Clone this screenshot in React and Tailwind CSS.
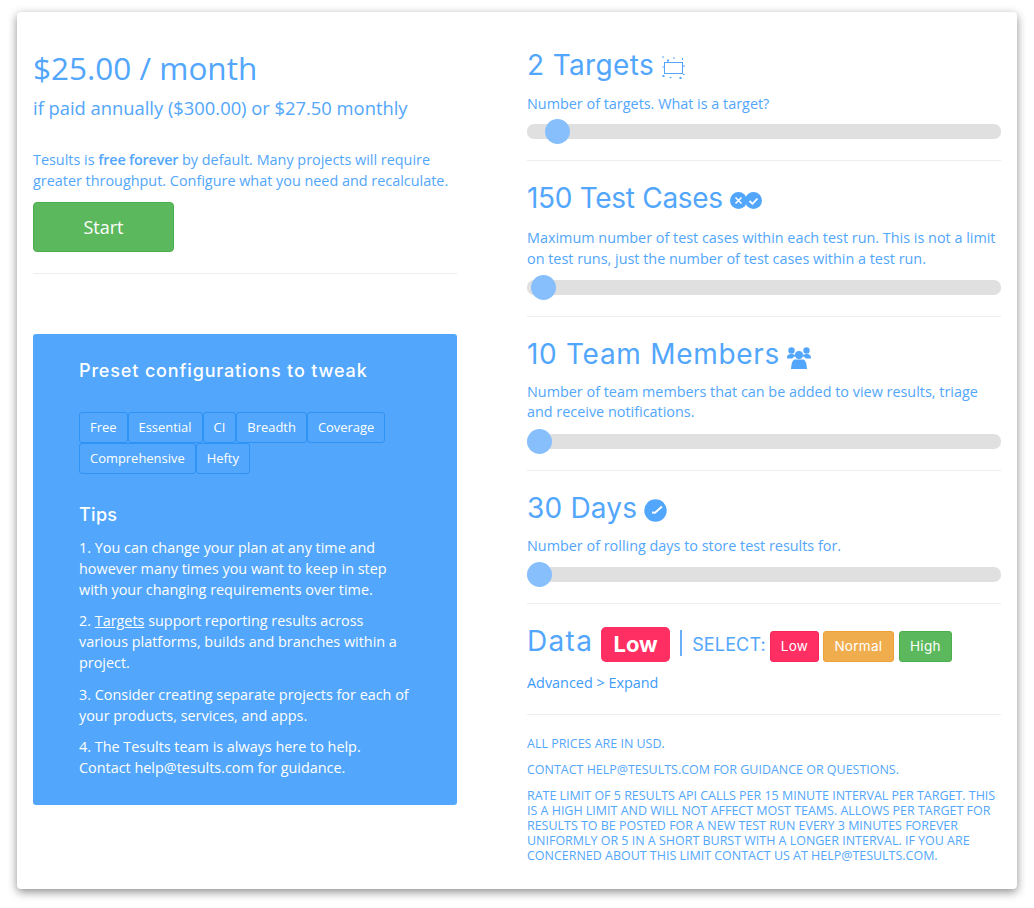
const HEAD = "font-['Inter',sans-serif]";

function TargetIcon() {
  return (
    <svg width="24" height="25" viewBox="0 0 24 25" fill="#52a6fb" className="ml-[7px] mt-[10px]">
      <rect x="3.500" y="7.500" width="18" height="11" fill="none" stroke="#52a6fb" strokeWidth="1" />
      <rect x="1.500" y="1" width="1" height="2" /><rect x="6" y="4.500" width="2" height="2" />
      <rect x="12" y="2.500" width="2" height="1" /><rect x="21" y="3" width="1" height="2" />
      <rect x="1.500" y="11.500" width="2" height="1" /><rect x="22" y="10.500" width="2" height="1" />
      <rect x="1.500" y="20" width="2" height="2" /><rect x="8.500" y="22" width="2" height="1" />
      <rect x="18.500" y="22" width="2" height="2" /><rect x="22" y="19" width="1.500" height="1" />
    </svg>
  );
}

function CasesIcon() {
  return (
    <svg width="32" height="17" viewBox="0 0 32 17" className="ml-[7px] mt-[14px]">
      <circle cx="8.500" cy="8.500" r="8.500" fill="#52a6fb" />
      <circle cx="23.500" cy="8.500" r="8.500" fill="#52a6fb" />
      <path d="M5.500 5.500l6 6M11.500 5.500l-6 6" stroke="#fff" strokeWidth="1.600" fill="none" />
      <path d="M19.500 9l3 2.800 5-5.300" stroke="#fff" strokeWidth="1.800" fill="none" />
    </svg>
  );
}

function TeamIcon() {
  return (
    <svg width="24" height="22" viewBox="0 0 24 22" fill="#52a6fb" className="ml-[7px] mt-[13px]">
      <circle cx="4.500" cy="3.500" r="3.200" /><circle cx="19.500" cy="3.500" r="3.200" />
      <path d="M0 11.500c0-3.500 1.500-4.500 4.500-4.500s4 1 4.500 2c-2 .5-3 1.200-3.800 2.500z" />
      <path d="M24 11.500c0-3.500-1.500-4.500-4.500-4.500s-4 1-4.500 2c2 .5 3 1.200 3.800 2.500z" />
      <circle cx="12" cy="8" r="4" />
      <path d="M4 22c.5-5 1-9 4-9.500h8c3 .5 3.500 4.500 4 9.500z" />
    </svg>
  );
}

function DaysIcon() {
  return (
    <svg width="23" height="23" viewBox="0 0 23 23" className="ml-[7px] mt-[11px]">
      <circle cx="11.500" cy="11.500" r="11.200" fill="#52a6fb" />
      <path d="M8 13.500l3 .3 7-6.300" stroke="#fff" strokeWidth="2" fill="none" />
    </svg>
  );
}

function Slider({ left }) {
  return (
    <div className="relative h-[15px] rounded-[7px] bg-[#e0e0e0]">
      <div className="absolute top-[-5px] h-[25px] w-[25px] rounded-full bg-[#87bffc]" style={{ left }} />
    </div>
  );
}

function Section({ title, track, icon, children }) {
  return (
    <div className="border-b border-[#eeeeee] pb-[21px] pt-[17px]">
      <div className="flex h-[40px] items-start">
        <h2 className={`${HEAD} text-[28px] leading-[40px] font-normal text-[#52a6fb] ${track}`}>{title}</h2>
        {icon}
      </div>
      {children}
    </div>
  );
}

function Preset({ children }) {
  return (
    <button className="h-[31px] rounded-[3px] border border-[#2e93f5] bg-[#52a6fb] px-[10px] text-[12.95px] text-white">
      {children}
    </button>
  );
}

function Pill({ style, children }) {
  return (
    <span className={`${HEAD} mt-[27px] flex h-[31px] items-center justify-center rounded-[3px] border text-[13.5px] tracking-[0.3px] text-white ${style}`}>
      {children}
    </span>
  );
}

const SUB = "text-[14.4px] text-[#52a6fb]";

export default function App() {
  return (
    <div className="min-h-[908px] bg-white pl-[17px] pt-[12px] font-['Open_Sans',sans-serif]">
      <div className="flex h-[877px] w-[1000px] justify-between rounded-[4px] bg-white px-[16px] shadow-[0_3px_10px_rgba(0,0,0,0.45)]">
        <div className="w-[424px]">
          <h1 className="mt-[33px] text-[31.5px] leading-[46px] text-[#52a6fb]">$25.00 / month</h1>
          <p className="mt-[4px] text-[18.35px] leading-[26px] text-[#52a6fb]">if paid annually ($300.00) or $27.50 monthly</p>
          <p className={`mt-[28px] leading-[21px] ${SUB}`}>
            Tesults is <b className="font-semibold tracking-[-0.2px]">free forever</b> by default. Many projects will require greater throughput. Configure what you need and recalculate.
          </p>
          <button className="mt-[11px] h-[50px] w-[141px] rounded-[4px] border border-[#4cae4c] bg-[#5cb85c] text-[18px] text-white">Start</button>
          <div className="mt-[21px] border-t border-[#eeeeee]" />
          <div className="mt-[60px] h-[471px] rounded-[3px] bg-[#52a6fb] px-[46px] pt-[24px] text-white">
            <h3 className={`${HEAD} text-[18px] leading-[26px] font-medium tracking-[0.85px]`}>Preset configurations to tweak</h3>
            <div className="mt-[28px] flex flex-wrap">
              {["Free", "Essential", "CI", "Breadth", "Coverage", "Comprehensive", "Hefty"].map((p) => (
                <Preset key={p}>{p}</Preset>
              ))}
            </div>
            <h3 className={`${HEAD} mt-[28px] text-[18px] leading-[26px] font-medium tracking-[0.3px]`}>Tips</h3>
            <div className="mt-[9px] text-[14.4px] leading-[21px]">
              <p>1. You can change your plan at any time and however many times you want to keep in step with your changing requirements over time.</p>
              <p className="mt-[10px]">2. <u>Targets</u> support reporting results across various platforms, builds and branches within a project.</p>
              <p className="mt-[11px]">3. Consider creating separate projects for each of your products, services, and apps.</p>
              <p className="mt-[10px]">4. The Tesults team is always here to help. Contact help@tesults.com for guidance.</p>
            </div>
          </div>
        </div>
        <div className="w-[474px] pt-[33px]">
          <div className="border-b border-[#eeeeee] pb-[21px]">
            <div className="flex h-[40px] items-start">
              <h2 className={`${HEAD} text-[28px] leading-[40px] font-normal tracking-[0.35px] text-[#52a6fb]`}>2 Targets</h2>
              <TargetIcon />
            </div>
            <p className={`mb-[10px] mt-[8px] leading-[21px] ${SUB}`}>Number of targets. What is a target?</p>
            <Slider left="18px" />
          </div>
          <Section title="150 Test Cases" track="tracking-[-0.3px]" icon={<CasesIcon />}>
            <p className={`mb-[11px] mt-[9px] leading-[21px] ${SUB}`}>Maximum number of test cases within each test run. This is not a limit on test runs, just the number of test cases within a test run.</p>
            <Slider left="4px" />
          </Section>
          <Section title="10 Team Members" track="tracking-[0.7px]" icon={<TeamIcon />}>
            <p className={`mb-[12px] mt-[8px] leading-[20px] ${SUB}`}>Number of team members that can be added to view results, triage and receive notifications.</p>
            <Slider left="0px" />
          </Section>
          <Section title="30 Days" track="tracking-[0.2px]" icon={<DaysIcon />}>
            <p className={`mb-[11px] mt-[7px] leading-[21px] ${SUB}`}>Number of rolling days to store test results for.</p>
            <Slider left="0px" />
          </Section>
          <div className="flex h-[68px] items-start">
            <span className={`${HEAD} mt-[17px] text-[28px] leading-[40px] tracking-[1.3px] text-[#52a6fb]`}>Data</span>
            <span className={`${HEAD} ml-[8px] mt-[23px] flex h-[35px] w-[69px] items-center justify-center rounded-[5px] bg-[#ff2e63] text-[22px] font-bold text-white`}>Low</span>
            <span className="ml-[10px] mt-[26px] h-[26px] w-[2px] bg-[#6aaef8]" />
            <span className={`${HEAD} ml-[10px] mr-[4px] mt-[28px] text-[18px] leading-[26px] tracking-[0.15px] text-[#52a6fb]`}>SELECT:</span>
            <div className="flex gap-[4px]">
              <Pill style="w-[49px] bg-[#ff2e63] border-[#f5275b]">Low</Pill>
              <Pill style="w-[71px] bg-[#f0ad4e] border-[#eea236]">Normal</Pill>
              <Pill style="ml-[1px] w-[53px] bg-[#5cb85c] border-[#4cae4c]">High</Pill>
            </div>
          </div>
          <p className="border-b border-[#eeeeee] pb-[21px] text-[14.4px] leading-[21px] text-[#3d9bf8]">Advanced &gt; Expand</p>
          <div className="mt-[21px] text-[12.48px] leading-[15px] uppercase text-[#52a6fb]">
            <p>All prices are in USD.</p>
            <p className="mt-[11px]">Contact help@tesults.com for guidance or questions.</p>
            <p className="mt-[11px]">Rate limit of 5 results API calls per 15 minute interval per target. This is a high limit and will not affect most teams. Allows per target for results to be posted for a new test run every 3 minutes forever uniformly or 5 in a short burst with a longer interval. If you are concerned about this limit contact us at help@tesults.com.</p>
          </div>
        </div>
      </div>
    </div>
  );
}
